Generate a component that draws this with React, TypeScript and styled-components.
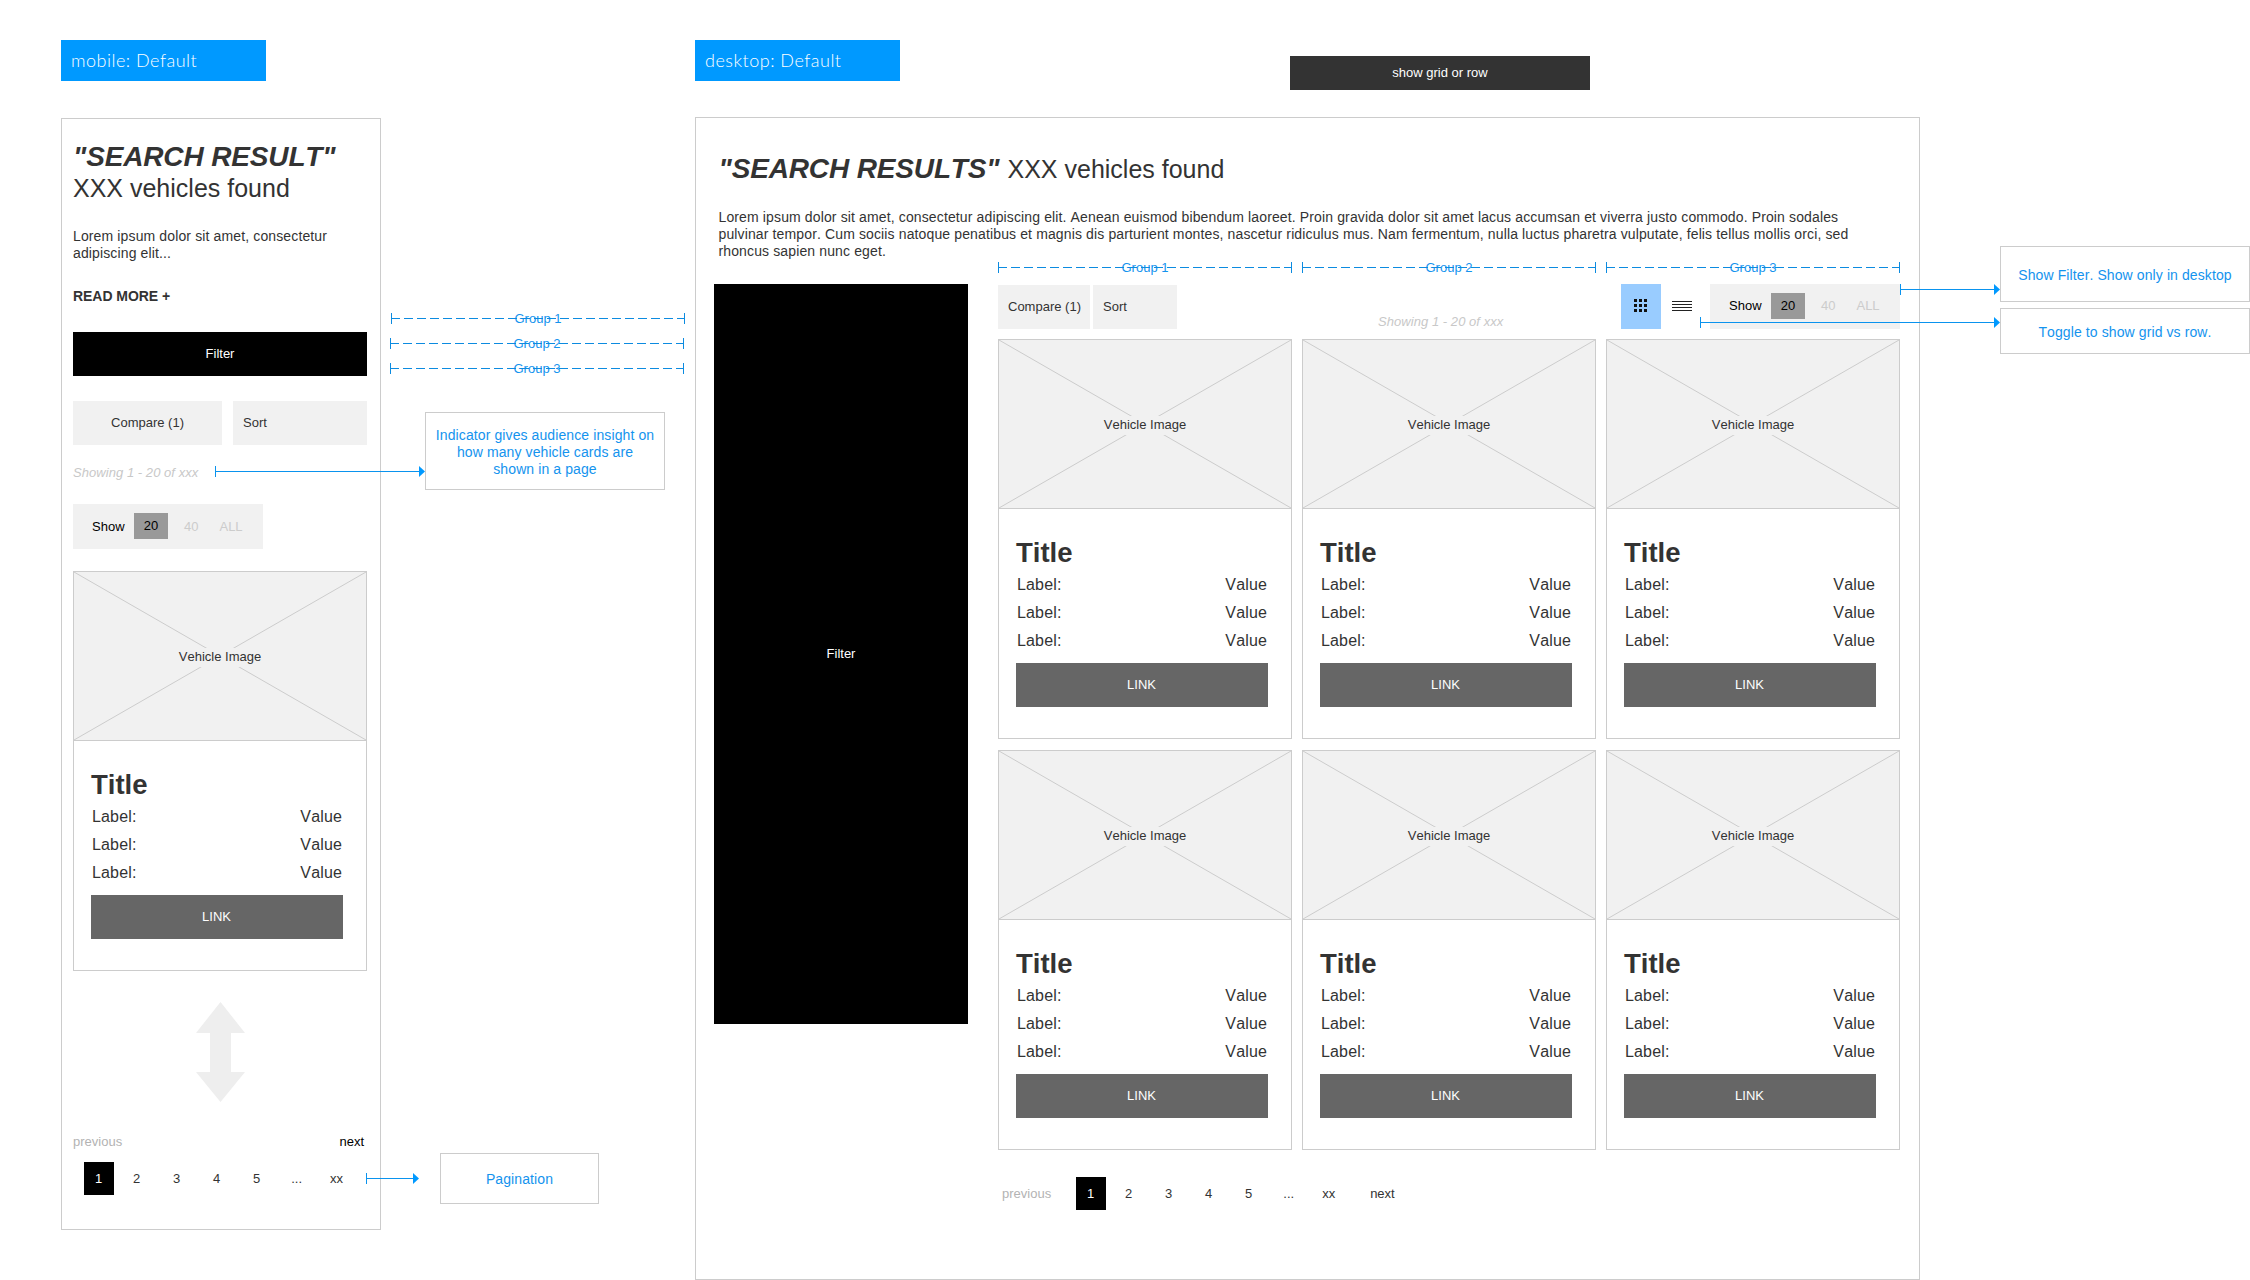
import React from 'react';
import styled, { createGlobalStyle, css } from 'styled-components';

const Global = createGlobalStyle`
  *, *::before, *::after { box-sizing: border-box; }
  body {
    margin: 0;
    background: #fff;
    color: #333;
    font-family: "Liberation Sans", Arial, Helvetica, sans-serif;
    font-size: 13px;
    font-kerning: none;
    line-height: 15px;
  }
  h1, h2, p { margin: 0; }
`;

const BLUE = '#1493ee';

const Canvas = styled.main`
  position: relative;
  display: flex;
  align-items: flex-start;
  gap: 314px;
  width: 2250px;
  height: 1280px;
  padding: 40px 0 0 61px;
  overflow: hidden;
`;

const Artboard = styled.section<{ $width: number }>`
  width: ${p => p.$width}px;
  flex: none;
`;

const BoardHead = styled.div<{ $gap: number }>`
  display: flex;
  align-items: flex-start;
  margin-bottom: ${p => p.$gap}px;
`;

const BoardLabel = styled.div`
  width: 205px;
  height: 41px;
  padding-left: 10px;
  background: #0099ff;
  color: #fff;
  font: 300 18px/41px Lato, sans-serif;
  letter-spacing: 0.5px;
  white-space: nowrap;
`;

const ModeTag = styled.div`
  width: 300px;
  height: 34px;
  margin: 16px 0 0 390px;
  background: #333;
  color: #fff;
  line-height: 34px;
  text-align: center;
`;

const Frame = styled.div<{ $height: number; $pad: string }>`
  display: flex;
  flex-direction: column;
  height: ${p => p.$height}px;
  padding: ${p => p.$pad};
  border: 1px solid #ccc;
`;

const Lead = styled.header<{ $inset?: boolean }>`
  padding-left: ${p => (p.$inset ? 4.5 : 0)}px;
`;

const Heading = styled.h1<{ $stacked?: boolean }>`
  display: flex;
  flex-direction: ${p => (p.$stacked ? 'column' : 'row')};
  align-items: baseline;
  gap: ${p => (p.$stacked ? 0 : 8)}px;
  font-weight: 400;
  line-height: 32px;
`;

const Query = styled.em`
  font-size: 28px;
  font-weight: 700;
  letter-spacing: -0.14px;
  white-space: nowrap;
`;

const Count = styled.span<{ $tight?: boolean }>`
  font-size: 25px;
  line-height: ${p => (p.$tight ? 30 : 32)}px;
  white-space: nowrap;
`;

const Intro = styled.p<{ $top: number; $line: number }>`
  margin-top: ${p => p.$top}px;
  font-size: 14px;
  letter-spacing: 0.13px;
  line-height: ${p => p.$line}px;
  white-space: nowrap;
`;

const ReadMore = styled.div`
  margin-top: 26px;
  font-size: 14px;
  font-weight: 700;
  letter-spacing: -0.05px;
  line-height: 17px;
`;

const Filter = styled.div<{ $tall?: boolean }>`
  display: flex;
  flex: none;
  align-items: center;
  justify-content: center;
  width: ${p => (p.$tall ? '254px' : 'auto')};
  height: ${p => (p.$tall ? 740 : 44)}px;
  padding-bottom: ${p => (p.$tall ? 0 : 1)}px;
  background: #000;
  color: #fff;
`;

const ActionRow = styled.div<{ $gap: number }>`
  display: flex;
  gap: ${p => p.$gap}px;
`;

const Action = styled.div<{ $width: number; $center?: boolean }>`
  width: ${p => p.$width}px;
  height: 44px;
  padding-left: ${p => (p.$center ? 0 : 10)}px;
  background: #f1f1f1;
  line-height: 44px;
  text-align: ${p => (p.$center ? 'center' : 'left')};
  white-space: nowrap;
`;

const Showing = styled.div`
  color: #c8c8c8;
  font-style: italic;
  letter-spacing: 0.05px;
  white-space: nowrap;
`;

const SizePicker = styled.div`
  display: flex;
  align-items: center;
  width: 190px;
  height: 45px;
  padding: 0 0 1px 19px;
  background: #f1f1f1;
  color: #000;
`;

const SizeOption = styled.span<{ $on?: boolean; $left: number }>`
  margin-left: ${p => p.$left}px;
  color: #ccc;
  ${p =>
    p.$on &&
    css`
      width: 34px;
      height: 26px;
      background: #999;
      color: #000;
      line-height: 26px;
      text-align: center;
    `}
`;

const ShowWord = styled.span`
  width: 33px;
`;

const CardBox = styled.article`
  display: flex;
  flex-direction: column;
  width: 294px;
  height: 400px;
  border: 1px solid #ccc;
`;

const Picture = styled.div`
  display: grid;
  place-items: center;
  height: 169px;
  border-bottom: 1px solid #ccc;
  background: #f1f1f1;

  > * { grid-area: 1 / 1; }
`;

const Cross = styled.svg`
  width: 292px;
  height: 168px;
`;

const PictureLabel = styled.span`
  z-index: 1;
  height: 19px;
  margin-top: 3px;
  background: #f1f1f1;
  line-height: 18px;
`;

const CardBody = styled.div`
  width: 252px;
  margin: 26px 0 0 17px;
`;

const CardTitle = styled.h2`
  height: 36px;
  font-size: 27.5px;
  font-weight: 700;
  line-height: 35px;
`;

const Spec = styled.div`
  display: flex;
  justify-content: space-between;
  height: 28px;
  padding: 0 1px;
  font-size: 16px;
  letter-spacing: 0.15px;
  line-height: 28px;
`;

const LinkButton = styled.div`
  height: 44px;
  margin-top: 8px;
  padding-right: 1px;
  background: #666;
  color: #fff;
  line-height: 43px;
  text-align: center;
`;

const ScrollArrow = styled.svg`
  display: block;
  width: 49px;
  height: 100px;
  margin: 31px 0 0 123px;
`;

const PagerEnds = styled.div`
  display: flex;
  justify-content: space-between;
  margin-top: 32px;
  padding-right: 3px;
`;

const PagerEnd = styled.span<{ $muted?: boolean; $dark?: boolean }>`
  color: ${p => (p.$muted ? '#b3b3b3' : p.$dark ? '#000' : '#333')};
`;

const Pager = styled.div`
  display: flex;
  align-items: center;
  height: 33px;
`;

const Page = styled.span<{ $on?: boolean }>`
  width: ${p => (p.$on ? 30 : 40)}px;
  height: 33px;
  margin-right: ${p => (p.$on ? 2.6 : 0)}px;
  padding-right: ${p => (p.$on ? 1 : 0)}px;
  background: ${p => (p.$on ? '#000' : 'transparent')};
  color: ${p => (p.$on ? '#fff' : '#333')};
  line-height: 33px;
  text-align: center;
`;

const MobilePager = styled.div`
  margin: 13px 0 0 11px;
`;

const DesktopPager = styled.div`
  display: flex;
  align-items: center;
  gap: 25px;
  margin: 27px 0 0 4px;
`;

const NextSlot = styled.div`
  margin-left: -3.6px;
`;

const Columns = styled.div`
  display: flex;
  gap: 30px;
`;

const Results = styled.div`
  width: 902px;
`;

const Toolbar = styled.div`
  display: flex;
  height: 45px;
  margin-bottom: 10px;
`;

const ToolbarActions = styled.div`
  width: 380px;
  padding-top: 1px;
`;

const ToolbarCount = styled.div`
  width: 243px;
  padding-top: 30px;
`;

const Toggle = styled.div<{ $on?: boolean }>`
  display: grid;
  place-items: center;
  width: ${p => (p.$on ? 40 : 42)}px;
  height: 45px;
  background: ${p => (p.$on ? '#99ccff' : 'transparent')};
`;

const PickerSlot = styled.div`
  margin-left: 7px;
`;

const CardGrid = styled.div`
  display: grid;
  grid-template-columns: repeat(3, 294px);
  gap: 11px 10px;
`;

const Spacer = styled.div<{ $h: number }>`
  flex: none;
  height: ${p => p.$h}px;
`;

const Note = styled.aside<{ $x: number; $y: number; $w: number; $h: number; $top: number }>`
  position: absolute;
  left: ${p => p.$x}px;
  top: ${p => p.$y}px;
  width: ${p => p.$w}px;
  height: ${p => p.$h}px;
  padding-top: ${p => p.$top}px;
  border: 1px solid #ccc;
  background: #fff;
  color: ${BLUE};
  font-size: 14px;
  letter-spacing: 0.1px;
  line-height: 17px;
  text-align: center;
  white-space: nowrap;
`;

const Pin = styled.svg<{ $x: number; $y: number }>`
  position: absolute;
  left: ${p => p.$x}px;
  top: ${p => p.$y}px;
  height: 11px;
`;

const SpanBox = styled.div<{ $x: number; $y: number }>`
  position: absolute;
  left: ${p => p.$x}px;
  top: ${p => p.$y}px;
  display: grid;
  grid-template-rows: 11px;
  place-items: center;
  width: 294px;
  height: 11px;
  color: ${BLUE};
  line-height: 11px;

  > * { grid-area: 1 / 1; }
`;

const Pointer = ({ x, y, length }: { x: number; y: number; length: number }) => (
  <Pin $x={x} $y={y - 5} width={length} viewBox={`0 0 ${length} 11`}>
    <path d={`M.5 0V11M0 5.5H${length - 5}`} stroke="#0a93ee" fill="none" />
    <path d={`M${length - 6} 0L${length} 5.5L${length - 6} 11Z`} fill="#0099ff" />
  </Pin>
);

const Measure = ({ x, y, children }: { x: number; y: number; children: React.ReactNode }) => (
  <SpanBox $x={x} $y={y - 5}>
    <span>{children}</span>
    <svg width="294" height="11" viewBox="0 0 294 11">
      <path d="M.5 0V11M293.5 0V11" stroke="#0c8be0" />
      <path d="M0 5.5H294" stroke="#0c8be0" strokeDasharray="9 4" />
    </svg>
  </SpanBox>
);

const GridIcon = () => (
  <svg width="14" height="15" viewBox="0 0 14 15">
    {[0, 5, 10].map(y => [0, 5, 10].map(x => <rect key={`${x}-${y}`} x={x} y={y} width="3" height="3" fill="#111" />))}
  </svg>
);

const RowsIcon = () => (
  <svg width="20" height="11" viewBox="0 0 20 11">
    <path d="M0 .5H20M0 3.5H20M0 6.5H20M0 9.5H20" stroke="#222" />
  </svg>
);

const Card = () => (
  <CardBox>
    <Picture>
      <Cross viewBox="0 0 292 168">
        <path d="M0 0L292 168M292 0L0 168" stroke="#ccc" />
      </Cross>
      <PictureLabel>Vehicle Image</PictureLabel>
    </Picture>
    <CardBody>
      <CardTitle>Title</CardTitle>
      {[1, 2, 3].map(n => (
        <Spec key={n}>
          <span>Label:</span>
          <span>Value</span>
        </Spec>
      ))}
      <LinkButton>LINK</LinkButton>
    </CardBody>
  </CardBox>
);

const ShowPicker = () => (
  <SizePicker>
    <ShowWord>Show</ShowWord>
    <SizeOption $on $left={9}>20</SizeOption>
    <SizeOption $left={16}>40</SizeOption>
    <SizeOption $left={21}>ALL</SizeOption>
  </SizePicker>
);

const Pages = () => (
  <Pager>
    {['1', '2', '3', '4', '5', '...', 'xx'].map((label, i) => (
      <Page key={label} $on={i === 0}>{label}</Page>
    ))}
  </Pager>
);

export default function App() {
  return (
    <>
      <Global />
      <Canvas>
        <Artboard $width={320}>
          <BoardHead $gap={37}>
            <BoardLabel>mobile: Default</BoardLabel>
          </BoardHead>
          <Frame $height={1112} $pad="22px 13px 0 11px">
            <Lead>
              <Heading $stacked>
                <Query>"SEARCH RESULT"</Query>
                <Count $tight>XXX vehicles found</Count>
              </Heading>
              <Intro $top={25} $line={17}>
                Lorem ipsum dolor sit amet, consectetur<br />adipiscing elit...
              </Intro>
            </Lead>
            <ReadMore>READ MORE +</ReadMore>
            <Spacer $h={27} />
            <Filter>Filter</Filter>
            <Spacer $h={25} />
            <ActionRow $gap={11}>
              <Action $width={149} $center>Compare (1)</Action>
              <Action $width={134}>Sort</Action>
            </ActionRow>
            <Spacer $h={20} />
            <Showing>Showing 1 - 20 of xxx</Showing>
            <Spacer $h={24} />
            <ShowPicker />
            <Spacer $h={22} />
            <Card />
            <ScrollArrow viewBox="0 0 49 100">
              <path d="M24.5 0L49 31H35V70H49L24.5 100L0 70H14V31H0Z" fill="#eee" />
            </ScrollArrow>
            <PagerEnds>
              <PagerEnd $muted>previous</PagerEnd>
              <PagerEnd $dark>next</PagerEnd>
            </PagerEnds>
            <MobilePager>
              <Pages />
            </MobilePager>
          </Frame>
        </Artboard>

        <Artboard $width={1225}>
          <BoardHead $gap={27}>
            <BoardLabel>desktop: Default</BoardLabel>
            <ModeTag>show grid or row</ModeTag>
          </BoardHead>
          <Frame $height={1163} $pad="35px 18px 0 18px">
            <Lead $inset>
              <Heading>
                <Query>"SEARCH RESULTS"</Query>
                <Count>XXX vehicles found</Count>
              </Heading>
              <Intro $top={24} $line={16.8}>
                Lorem ipsum dolor sit amet, consectetur adipiscing elit. Aenean euismod bibendum laoreet. Proin gravida dolor sit amet lacus accumsan et viverra justo commodo. Proin sodales<br />
                pulvinar tempor. Cum sociis natoque penatibus et magnis dis parturient montes, nascetur ridiculus mus. Nam fermentum, nulla luctus pharetra vulputate, felis tellus mollis orci, sed<br />
                rhoncus sapien nunc eget.
              </Intro>
            </Lead>
            <Spacer $h={24.6} />
            <Columns>
              <Filter $tall>Filter</Filter>
              <Results>
                <Toolbar>
                  <ToolbarActions>
                    <ActionRow $gap={3}>
                      <Action $width={92}>Compare (1)</Action>
                      <Action $width={84}>Sort</Action>
                    </ActionRow>
                  </ToolbarActions>
                  <ToolbarCount>
                    <Showing>Showing 1 - 20 of xxx</Showing>
                  </ToolbarCount>
                  <Toggle $on><GridIcon /></Toggle>
                  <Toggle><RowsIcon /></Toggle>
                  <PickerSlot><ShowPicker /></PickerSlot>
                </Toolbar>
                <CardGrid>
                  {[1, 2, 3, 4, 5, 6].map(n => <Card key={n} />)}
                </CardGrid>
                <DesktopPager>
                  <PagerEnd $muted>previous</PagerEnd>
                  <Pages />
                  <NextSlot><PagerEnd>next</PagerEnd></NextSlot>
                </DesktopPager>
              </Results>
            </Columns>
          </Frame>
        </Artboard>

        <Measure x={391} y={318}>Group 1</Measure>
        <Measure x={390} y={343}>Group 2</Measure>
        <Measure x={390} y={368}>Group 3</Measure>
        <Measure x={998} y={267}>Group 1</Measure>
        <Measure x={1302} y={267}>Group 2</Measure>
        <Measure x={1606} y={267}>Group 3</Measure>

        <Note $x={425} $y={412} $w={240} $h={78} $top={14}>
          Indicator gives audience insight on<br />how many vehicle cards are<br />shown in a page
        </Note>
        <Note $x={440} $y={1153} $w={159} $h={51} $top={17}>Pagination</Note>
        <Note $x={2000} $y={246} $w={250} $h={56} $top={20}>Show Filter. Show only in desktop</Note>
        <Note $x={2000} $y={308} $w={250} $h={46} $top={15}>Toggle to show grid vs row.</Note>

        <Pointer x={215} y={471} length={210} />
        <Pointer x={366} y={1178} length={53} />
        <Pointer x={1900} y={289} length={100} />
        <Pointer x={1700} y={322} length={300} />
      </Canvas>
    </>
  );
}
